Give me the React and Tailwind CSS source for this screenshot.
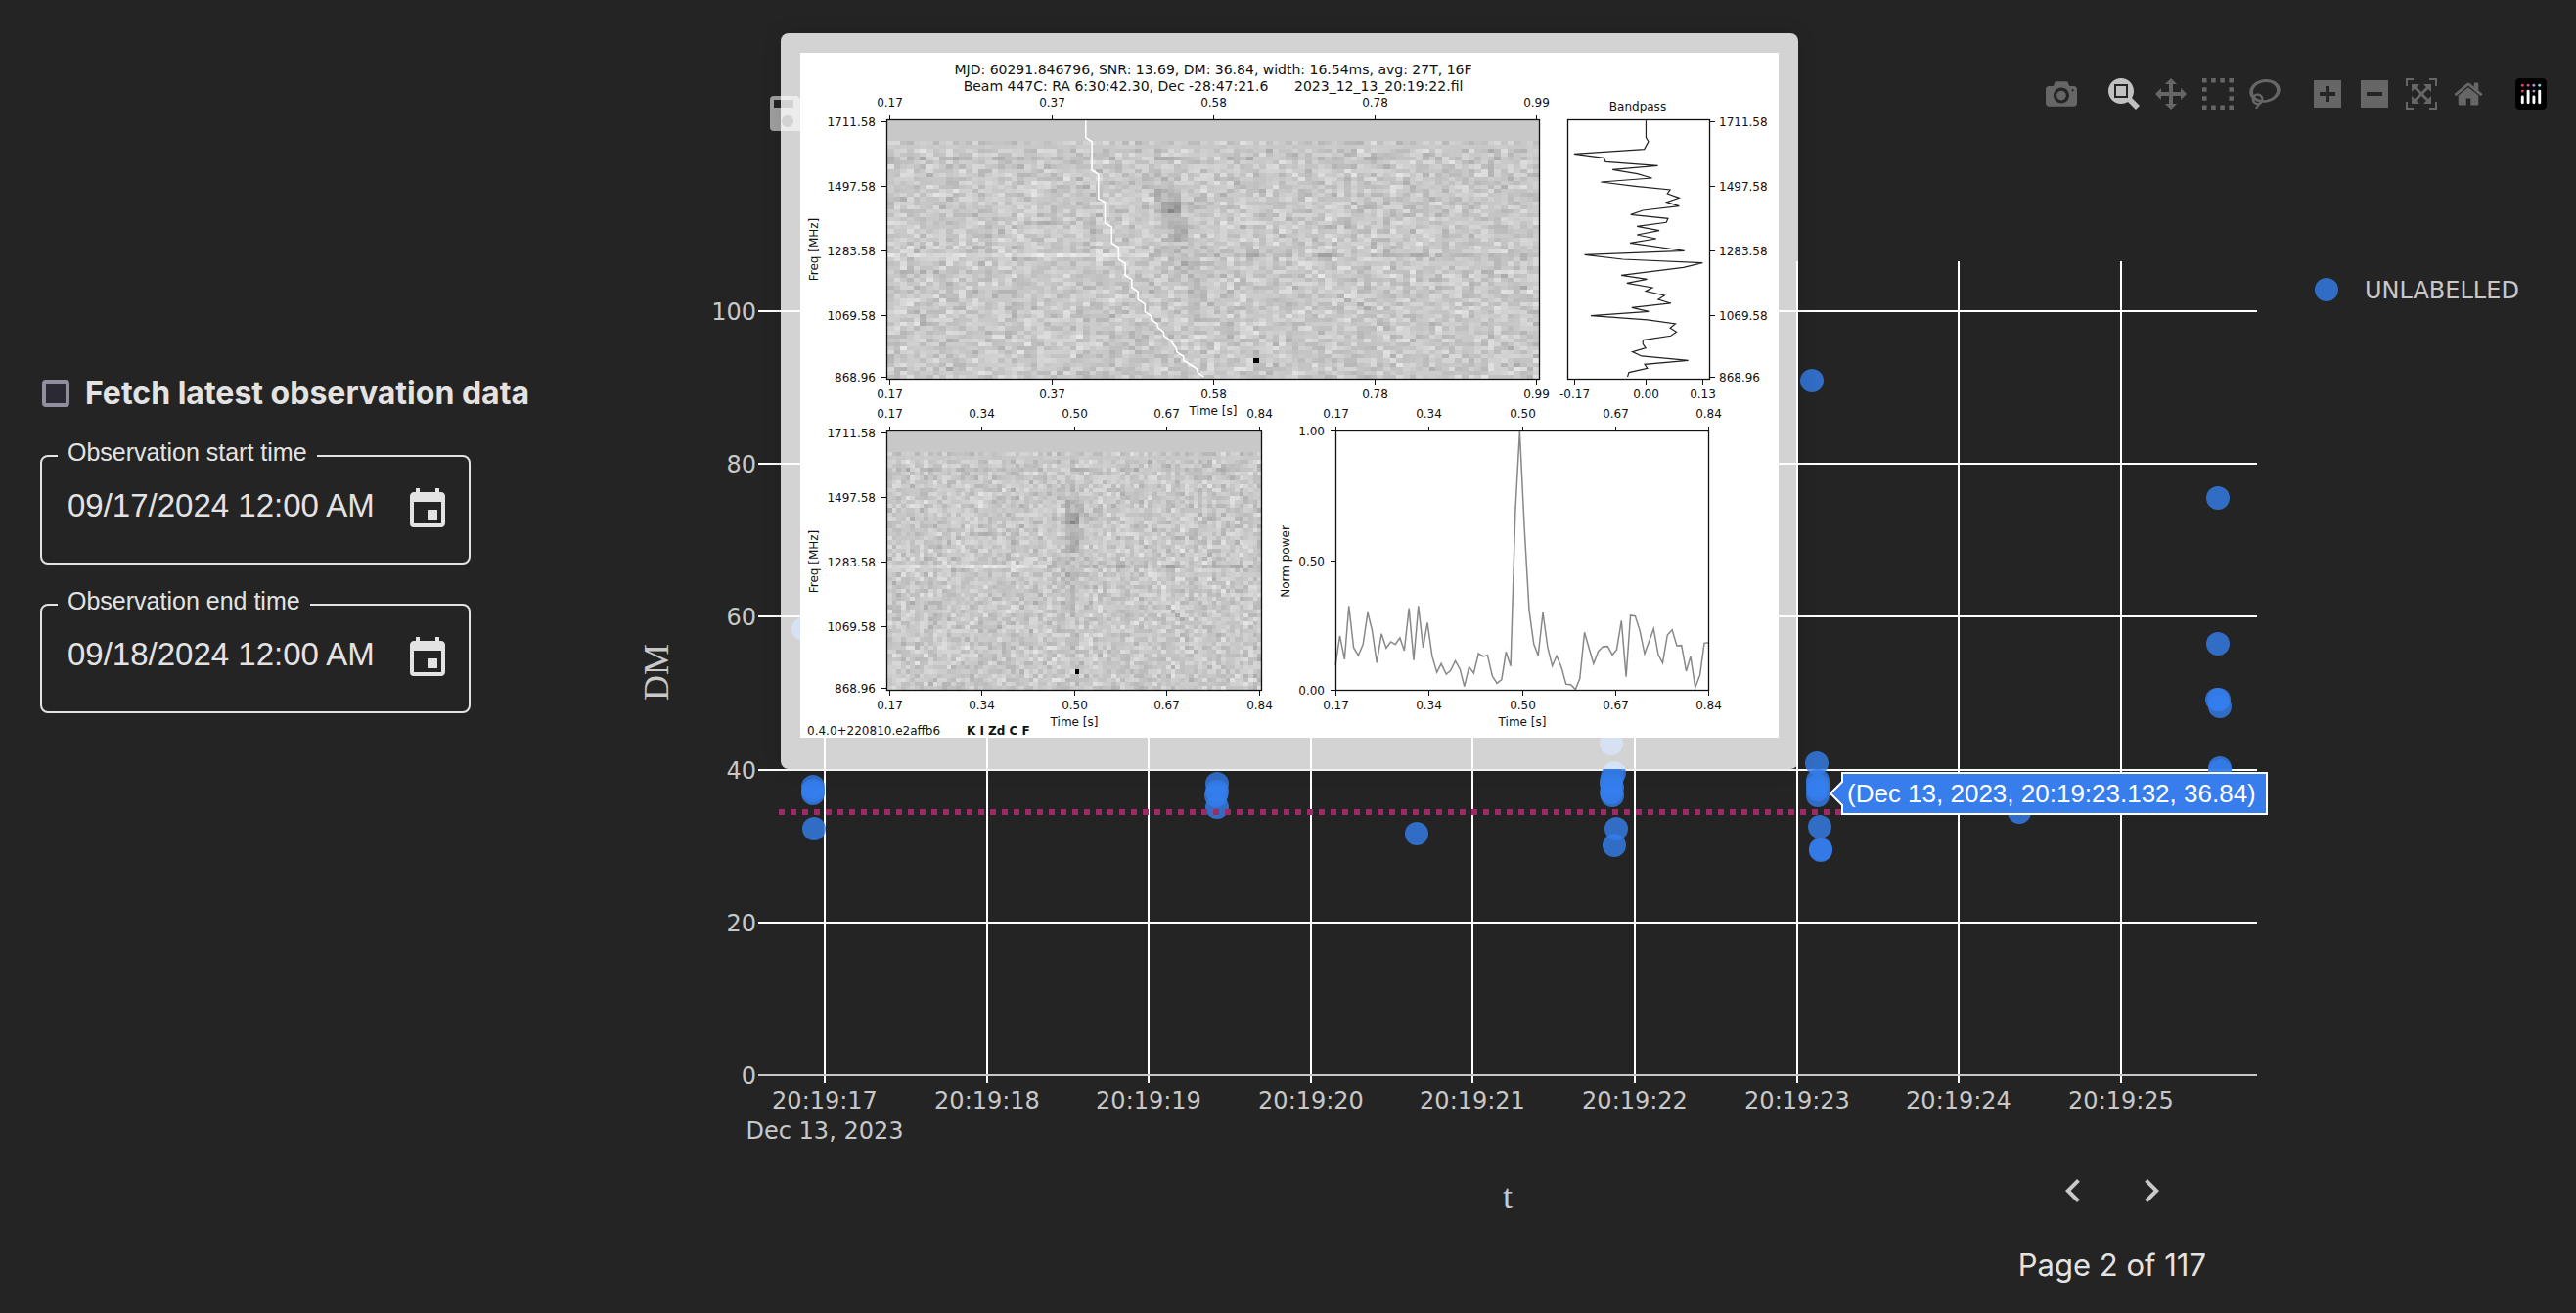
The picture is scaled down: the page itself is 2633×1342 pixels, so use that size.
import { MdChevronLeft, MdChevronRight, MdEvent, MdSave } from "react-icons/md";

const MODEBAR_GROUPS = [
  [
    {
      name: "Download plot as a png",
      width: 1000,
      path: "m500 450c-83 0-150-67-150-150 0-83 67-150 150-150 83 0 150 67 150 150 0 83-67 150-150 150z m400 150h-120c-16 0-34 13-39 29l-31 93c-6 15-23 28-40 28h-340c-16 0-34-13-39-28l-31-94c-6-15-23-28-40-28h-120c-55 0-100-45-100-100v-450c0-55 45-100 100-100h800c55 0 100 45 100 100v450c0 55-45 100-100 100z m-400-550c-138 0-250 112-250 250 0 138 112 250 250 250 138 0 250-112 250-250 0-138-112-250-250-250z m365 380c-19 0-35 16-35 35 0 19 16 35 35 35 19 0 35-16 35-35 0-19-16-35-35-35z",
    },
  ],
  [
    {
      name: "Zoom",
      active: true,
      width: 1000,
      path: "m1000-25l-250 251c40 63 63 138 63 218 0 224-182 406-407 406-224 0-406-182-406-406s183-406 407-406c80 0 155 22 218 62l250-250 125 125z m-812 250l0 438 437 0 0-438-437 0z m62 375l313 0 0-312-313 0 0 312z",
    },
    {
      name: "Pan",
      width: 1000,
      path: "m1000 350l-187 188 0-125-250 0 0 250 125 0-188 187-187-187 125 0 0-250-250 0 0 125-188-188 186-187 0 125 252 0 0-250-125 0 187-188 188 188-125 0 0 250 250 0 0-126 187 188z",
    },
    {
      name: "Box Select",
      width: 1000,
      path: "m0 850l0-143 143 0 0 143-143 0z m286 0l0-143 143 0 0 143-143 0z m285 0l0-143 143 0 0 143-143 0z m286 0l0-143 143 0 0 143-143 0z m-857-286l0-143 143 0 0 143-143 0z m857 0l0-143 143 0 0 143-143 0z m-857-285l0-143 143 0 0 143-143 0z m857 0l0-143 143 0 0 143-143 0z m-857-286l0-143 143 0 0 143-143 0z m286 0l0-143 143 0 0 143-143 0z m285 0l0-143 143 0 0 143-143 0z m286 0l0-143 143 0 0 143-143 0z",
    },
    {
      name: "Lasso Select",
      width: 1031,
      path: "m1018 538c-36 207-290 336-568 286-277-48-473-256-436-463 10-57 36-108 76-151-13-66 11-137 68-183 34-28 75-41 114-42l-55-70 0 0c-2-1-3-2-4-3-10-14-8-34 5-45 14-11 34-8 45 4 1 1 2 3 2 5l0 0 113 140c16 11 31 24 45 40 4 3 6 7 8 11 48-3 100 0 151 9 278 48 473 255 436 462z m-624-379c-80 14-149 48-197 96 42 42 109 47 156 9 33-26 47-66 41-105z m-187-74c-19 16-33 37-39 60 50-32 109-55 174-68-42-25-95-24-135 8z m360 75c-34-7-69-9-102-8 8 62-16 128-68 170-73 59-175 54-244-5-9 20-16 40-20 61-28 159 121 317 333 354s407-60 434-217c28-159-121-318-333-355z",
    },
  ],
  [
    {
      name: "Zoom in",
      width: 875,
      path: "m1 787l0-875 875 0 0 875-875 0z m687-500l-187 0 0-187-125 0 0 187-188 0 0 125 188 0 0 187 125 0 0-187 187 0 0-125z",
    },
    {
      name: "Zoom out",
      width: 875,
      path: "m0 788l0-876 875 0 0 876-875 0z m688-500l-500 0 0 125 500 0 0-125z",
    },
    {
      name: "Autoscale",
      width: 1000,
      path: "m250 850l-187 0-63 0 0-62 0-188 63 0 0 188 187 0 0 62z m688 0l-188 0 0-62 188 0 0-188 62 0 0 188 0 62-62 0z m-875-938l0 188-63 0 0-188 0-62 63 0 187 0 0 62-187 0z m875 188l0-188-188 0 0-62 188 0 62 0 0 62 0 188-62 0z m-125 188l-1 0-93-94-156 156 156 156 92-93 2 0 0 250-250 0 0-2 93-92-156-156-156 156 94 92 0 2-250 0 0-250 0 0 93 93 157-156-157-156-93 94 0 0 0-250 250 0 0 0-94 93 156 157 156-157-93-93 0 0 250 0 0 250z",
    },
    {
      name: "Reset axes",
      width: 929,
      path: "m786 296v-267q0-15-11-26t-25-10h-214v214h-143v-214h-214q-15 0-25 10t-11 26v267q0 1 0 2t0 2l321 264 321-264q1-1 1-4z m124 39l-34-41q-5-5-12-6h-2q-7 0-12 3l-386 322-386-322q-7-4-13-4-7 2-12 7l-35 41q-4 5-3 13t6 12l401 334q18 15 42 15t43-15l136-114v109q0 8 5 13t13 5h107q8 0 13-5t5-13v-227l122-102q5-5 6-12t-4-13z",
    },
  ],
];

function PlotlyLogo() {
  return (
    <svg viewBox="0 0 132 132" className="size-8">
      <rect width="132" height="132" rx="18" fill="#000" />
      <circle cx="30" cy="30" r="6" fill="#ef3c6e" />
      <circle cx="54" cy="30" r="6" fill="#c9568c" />
      <circle cx="78" cy="30" r="6" fill="#a49ccb" />
      <circle cx="102" cy="30" r="6" fill="#7bdcf2" />
      <circle cx="30" cy="54" r="6" fill="#ef3c6e" />
      <circle cx="78" cy="54" r="6" fill="#b09bc9" />
      <g fill="#fff">
        <rect x="24" y="72" width="12" height="36" rx="6" />
        <rect x="48" y="48" width="12" height="60" rx="6" />
        <rect x="72" y="72" width="12" height="36" rx="6" />
        <rect x="96" y="48" width="12" height="60" rx="6" />
      </g>
    </svg>
  );
}

function ModeBar() {
  return (
    <div className="flex gap-4">
      {MODEBAR_GROUPS.map((group, i) => (
        <div key={i} className="flex">
          {group.map((icon) => (
            <button
              key={icon.name}
              aria-label={icon.name}
              className={icon.active ? "p-2 text-[#c1c1c1]" : "p-2 text-[#666666]"}
            >
              <svg viewBox={`0 0 ${icon.width} 1000`} className="size-8">
                <path d={icon.path} fill="currentColor" transform="matrix(1 0 0 -1 0 850)" />
              </svg>
            </button>
          ))}
        </div>
      ))}
      <a href="#plotly" aria-label="Produced with Plotly" className="p-2">
        <PlotlyLogo />
      </a>
    </div>
  );
}

function DateTimeField({ id, label, value }) {
  return (
    <fieldset className="w-[440px] rounded-lg border-2 border-[#e3e3e3] text-[#e3e3e3] font-['Liberation_Sans',sans-serif]">
      <legend className="ml-4 px-[10px] pb-2 text-[25px] leading-6">
        <label htmlFor={id}>{label}</label>
      </legend>
      <div className="flex items-start justify-between pt-[15px] pb-[30px] pl-[26px] pr-[18px]">
        <input
          id={id}
          type="text"
          defaultValue={value}
          className="h-10 w-[330px] bg-transparent text-[33px] leading-10 outline-none"
        />
        <button aria-label={`Choose ${label}`}>
          <MdEvent size={48} />
        </button>
      </div>
    </fieldset>
  );
}

function Sidebar() {
  return (
    <aside className="w-[600px] shrink-0 pl-[41px] pt-[382px]">
      <div className="flex items-center gap-4 pl-0.5">
        <input
          id="latest"
          type="checkbox"
          className="size-7 appearance-none rounded-sm border-4 border-[#8f8f9d] bg-[#2b2a33]"
        />
        <label
          htmlFor="latest"
          className="whitespace-nowrap text-[32px] font-bold leading-10 text-[#e3e3e3] font-['Inter',sans-serif]"
        >
          Fetch latest observation data
        </label>
      </div>
      <div className="mt-7 flex flex-col gap-[25px]">
        <DateTimeField id="start" label="Observation start time" value="09/17/2024 12:00 AM" />
        <DateTimeField id="end" label="Observation end time" value="09/18/2024 12:00 AM" />
      </div>
    </aside>
  );
}

/* ---- candidate scatter plot ---- */

const SECONDS = [17, 18, 19, 20, 21, 22, 23, 24, 25];
const DM_TICKS = [0, 20, 40, 60, 80, 100];

const secondX = (s) => Math.round(843 + (s - 17) * 165.6);
const dmY = (dm) => Math.round(1099 - dm * 7.81);

const CANDIDATES = [
  [821, 643],
  [831, 804], [831, 808], [831, 811], [832, 847],
  [1244, 801], [1244, 809], [1243, 813], [1244, 825],
  [1448, 852],
  [1647, 760], [1650, 790], [1648, 794], [1647, 799], [1647, 801], [1648, 805], [1647, 810], [1648, 813],
  [1652, 847], [1650, 864],
  [1852, 389],
  [1857, 780], [1858, 798], [1858, 803], [1858, 807], [1858, 813],
  [1860, 845], [1861, 868], [1861, 869],
  [2064, 830],
  [2267, 509], [2267, 658],
  [2266, 715], [2268, 715], [2269, 722],
  [2269, 785], [2269, 788],
];

function CandidatePlot() {
  return (
    <svg viewBox="600 140 2033 1037" className="block w-full" fontFamily="'DejaVu Sans', Verdana, sans-serif" fontSize="24" fill="#c8c8c8">
      <g stroke="#fff" strokeWidth="2">
        {SECONDS.map((s) => (
          <line key={s} x1={secondX(s)} x2={secondX(s)} y1="267" y2="1107" />
        ))}
        {DM_TICKS.map((dm) => (
          <line key={dm} x1="775" x2="2307" y1={dmY(dm)} y2={dmY(dm)} stroke={dm === 0 ? "#c8c8c8" : "#fff"} />
        ))}
      </g>

      {DM_TICKS.map((dm) => (
        <text key={dm} x="773" y={dmY(dm) + 9} textAnchor="end">
          {dm}
        </text>
      ))}
      {SECONDS.map((s) => (
        <text key={s} x={secondX(s)} y="1133" textAnchor="middle">
          20:19:{s}
        </text>
      ))}
      <text x="843" y="1164" textAnchor="middle">
        Dec 13, 2023
      </text>
      <text transform="translate(683 687) rotate(-90)" textAnchor="middle" fontFamily="'Liberation Serif', serif" fontSize="36">
        DM
      </text>

      {CANDIDATES.map(([x, y], i) => (
        <circle key={i} cx={x} cy={y} r="12" fill="#357eee" opacity="0.8" />
      ))}
      <line x1="796" x2="2307" y1="830" y2="830" stroke="#9c2a66" strokeWidth="6" strokeDasharray="6 6" />

      <circle cx="2378" cy="296" r="12" fill="#357eee" opacity="0.8" />
      <text x="2417" y="305">
        UNLABELLED
      </text>

      <path d="M1871 811 L1883 799 V790 H2317 V832 H1883 V823 Z" fill="#377dec" stroke="#fff" strokeWidth="2" />
      <text x="1888" y="820" fill="#fff" fontFamily="'Liberation Sans', Arial, sans-serif" fontSize="26">
        (Dec 13, 2023, 20:19:23.132, 36.84)
      </text>
    </svg>
  );
}

/* ---- single candidate preview ---- */

const CHANNELS = 64;
const FREQS = ["1711.58", "1497.58", "1283.58", "1069.58", "868.96"];

const TRACK =
  "291.8,69 291.8,86.7 298.1,90.7 298.1,120 304.8,124 304.8,149 311.5,152.7 311.5,174 318.3,178 318.3,194.7 325.4,198.7 325.4,211 332.1,215.3 332.1,227.3 338.8,231.7 338.8,240 345.2,244 345.2,252 352.3,256.7 352.3,264.7 358.6,269 358.6,272.7 365.3,277.3 365.3,280.7 371.3,285.3 371.7,289.3 378.4,294 384.3,302 385,306 391.8,310.3 391.8,314.3 405.3,322.7 406.5,327 412.4,331";

const BANDPASS =
  "1071,310 1071,362 1078,374 1066,398 865,412 950,424 955,436 1105,448 975,460 1046,473 1088,486 942,498 1040,511 1140,522 1132,534 1166,547 1130,560 1166,572 1062,585 1027,598 1134,610 1129,622 1045,634 1109,647 1045,660 1100,672 1025,685 1181,709 895,721 1004,735 1233,746 1178,760 1000,784 1074,796 1016,808 1089,822 1070,833 1124,846 1106,858 1142,870 1030,883 1079,895 913,908 1075,921 1155,933 1140,946 1158,958 1142,970 1062,983 1062,995 1070,1007 1032,1019 1058,1032 1192,1045 1067,1057 1075,1069 1022,1082 1018,1095";

const PULSE =
  "230,840 242,750 255,822 267,658 280,786 293,810 306,776 319,678 331,732 344,832 357,743 370,787 383,768 395,776 408,756 420,795 433,665 446,824 459,658 472,786 484,709 497,812 510,862 522,835 536,867 548,856 561,826 574,852 586,905 599,845 612,864 625,804 638,813 650,809 663,872 676,895 689,884 701,799 714,842 727,365 739,122 752,420 765,670 778,776 790,810 803,678 816,784 829,842 841,811 854,845 867,898 880,899 893,914 905,881 918,739 931,790 943,835 956,797 969,783 982,782 995,808 1007,792 1020,703 1033,875 1045,687 1058,689 1071,734 1084,805 1109,728 1122,808 1134,833 1147,747 1160,731 1173,780 1186,779 1199,858 1211,813 1224,908 1237,870 1249,772 1262,770";

// dispersion delay of a channel, in time samples
function delay(row) {
  const f = 1711.58 - row * 13.4;
  return Math.round(18.3e6 * (1 / (f * f) - 1 / (1711.58 * 1711.58)));
}

function random(row, col) {
  let h = (row * 374761393 + col * 668265263) | 0;
  h = Math.imul(h ^ (h >>> 13), 1274126177);
  h = Math.imul(h ^ (h >>> 15), 2246822519);
  return ((h ^ (h >>> 16)) >>> 0) / 4294967296;
}

function burst(row) {
  if (row >= 20 && row <= 22) return 60;
  if (row >= 17 && row <= 24) return 32;
  if (row >= 25 && row <= 29) return 36;
  if (row >= 34 && row <= 38) return 16;
  return 6;
}

function sample(row, col) {
  const pulseCol = col - delay(row);
  if (row < 5) return 200;
  if (row === 59 && pulseCol === 41) return 0;
  const noise = random(row, col) + random(row + 100, col) + random(row + 200, col) - 1.5;
  const spread = row === 6 ? 4 : 22;
  let level = 201 + noise * spread;
  if (row > 6) level -= burst(row) * Math.exp(-((pulseCol - 40) ** 2) / 1.8);
  if (row === 33) level += col < 40 ? 18 : -12;
  if (row === 37 && col < 24) level -= 12;
  if (row === 9) level -= 6;
  return Math.max(0, Math.min(250, Math.round(level / 4) * 4));
}

function Waterfall({ x, y, width, height, cols, dedispersed }) {
  const levels = {};
  for (let r = 0; r < CHANNELS; r++) {
    const top = Math.round(y + (r * height) / CHANNELS);
    const bottom = Math.round(y + ((r + 1) * height) / CHANNELS);
    for (let c = 0; c < cols; c++) {
      const level = sample(r, dedispersed ? c + delay(r) : c);
      const left = Math.round(x + (c * width) / cols);
      const right = Math.round(x + ((c + 1) * width) / cols);
      levels[level] = (levels[level] || "") + `M${left} ${top}H${right}V${bottom}H${left}z`;
    }
  }
  return (
    <g shapeRendering="crispEdges">
      {Object.entries(levels).map(([level, d]) => (
        <path key={level} d={d} fill={`rgb(${level},${level},${level})`} />
      ))}
    </g>
  );
}

function Frame({ x, y, width, height }) {
  return <rect x={x} y={y} width={width} height={height} fill="none" stroke="#111" strokeWidth="1.3" />;
}

function XTicks({ xs, labels, top, bottom }) {
  return xs.map((x, i) => (
    <g key={x}>
      {top && <line x1={x} x2={x} y1={top - 5} y2={top} stroke="#111" />}
      {top && (
        <text x={x} y={top - 14} textAnchor="middle">
          {labels[i]}
        </text>
      )}
      <line x1={x} x2={x} y1={bottom} y2={bottom + 5} stroke="#111" />
      <text x={x} y={bottom + 19} textAnchor="middle">
        {labels[i]}
      </text>
    </g>
  ));
}

function YTicks({ x, ys, labels, right }) {
  return ys.map((y, i) => (
    <g key={y}>
      <line x1={right ? x : x - 5} x2={right ? x + 5 : x} y1={y} y2={y} stroke="#111" />
      <text x={right ? x + 9 : x - 11} y={y + 4} textAnchor={right ? "start" : "end"}>
        {labels[i]}
      </text>
    </g>
  ));
}

function CandidatePreview() {
  const wide = ["0.17", "0.37", "0.58", "0.78", "0.99"];
  const narrow = ["0.17", "0.34", "0.50", "0.67", "0.84"];
  return (
    <div className="absolute left-[198px] top-[34px] rounded-lg bg-white/80 px-5 pt-5 pb-8 shadow-[0_0_20px_rgba(0,0,0,0.12)]">
      <svg viewBox="0 0 1000 700" className="block h-[700px] w-[1000px] bg-white" fontFamily="'DejaVu Sans', sans-serif" fontSize="12" fill="#111">
        <g fontSize="14" textAnchor="middle">
          <text x="422" y="22">MJD: 60291.846796, SNR: 13.69, DM: 36.84, width: 16.54ms, avg: 27T, 16F</text>
          <text x="422" y="39">
            {"Beam 447C: RA 6:30:42.30, Dec -28:47:21.6\u00a0\u00a0\u00a0\u00a0\u00a0\u00a02023_12_13_20:19:22.fil"}
          </text>
        </g>

        <Waterfall x={89} y={69} width={667} height={264} cols={100} />
        <polyline points={TRACK} fill="none" stroke="#fff" strokeWidth="1.6" />
        <Frame x={88.5} y={68.5} width={667} height={265} />
        <XTicks xs={[91.5, 257.5, 422.5, 587.5, 752.5]} labels={wide} top={69} bottom={334} />
        <YTicks x={88} ys={[70.5, 136.5, 202.5, 268.5, 331.5]} labels={FREQS} />
        <text transform="translate(18 201) rotate(-90)" textAnchor="middle">Freq [MHz]</text>
        <text x="422" y="370" textAnchor="middle">Time [s]</text>

        <text x="856" y="59" textAnchor="middle">Bandpass</text>
        <polyline
          points={BANDPASS}
          transform="translate(482 -34) scale(0.3571 0.3333)"
          vectorEffect="non-scaling-stroke"
          fill="none"
          stroke="#222"
          strokeWidth="1.2"
        />
        <Frame x={784.5} y={68.5} width={145} height={265} />
        <XTicks xs={[791.5, 864.5, 922.5]} labels={["-0.17", "0.00", "0.13"]} bottom={334} />
        <YTicks x={930} ys={[70.5, 136.5, 202.5, 268.5, 331.5]} labels={FREQS} right />

        <Waterfall x={89} y={387} width={383} height={264} cols={82} dedispersed />
        <Frame x={88.5} y={386.5} width={383} height={265} />
        <XTicks xs={[91.5, 185.5, 280.5, 374.5, 469.5]} labels={narrow} top={387} bottom={652} />
        <YTicks x={88} ys={[388.5, 454.5, 520.5, 586.5, 649.5]} labels={FREQS} />
        <text transform="translate(18 520) rotate(-90)" textAnchor="middle">Freq [MHz]</text>
        <text x="280" y="688" textAnchor="middle">Time [s]</text>

        <polyline
          points={PULSE}
          transform="translate(462 346) scale(0.3699 0.3333)"
          vectorEffect="non-scaling-stroke"
          fill="none"
          stroke="#888"
          strokeWidth="1.5"
        />
        <Frame x={547.5} y={386.5} width={381} height={265} />
        <XTicks xs={[547.5, 642.5, 738.5, 833.5, 928.5]} labels={narrow} top={387} bottom={652} />
        <YTicks x={547} ys={[386.5, 519.5, 651.5]} labels={["1.00", "0.50", "0.00"]} />
        <text transform="translate(500 520) rotate(-90)" textAnchor="middle">Norm power</text>
        <text x="738" y="688" textAnchor="middle">Time [s]</text>

        <text x="7" y="697">0.4.0+220810.e2affb6</text>
        <text x="170" y="697" fontWeight="bold">K I Zd C F</text>
      </svg>
    </div>
  );
}

function Pagination() {
  return (
    <nav className="flex flex-col items-center gap-4 text-[31px] leading-10 text-[#e3e3e3] font-['Inter',sans-serif]">
      <div className="flex">
        <button aria-label="Previous page" className="p-4 text-[#c9c9c9]">
          <MdChevronLeft size={48} />
        </button>
        <button aria-label="Next page" className="p-4 text-[#c9c9c9]">
          <MdChevronRight size={48} />
        </button>
      </div>
      <span>Page 2 of 117</span>
    </nav>
  );
}

function App() {
  return (
    <div className="flex min-h-screen bg-[#242424]">
      <Sidebar />
      <main className="relative min-w-0 flex-1">
        <div className="flex items-start justify-between pl-[181px] pr-[22px] pt-[72px]">
          <button aria-label="Save" className="mt-5 h-12 text-[#a0a0a0]">
            <MdSave size={48} />
          </button>
          <ModeBar />
        </div>
        <CandidatePlot />
        <div className="ml-[175px] mr-[326px] grid grid-cols-3">
          <div className="col-start-2 pt-[22px] text-center text-4xl leading-[48px] text-[#c8c8c8] font-['Liberation_Serif',serif]">t</div>
          <div className="flex justify-end pr-[52px]">
            <Pagination />
          </div>
        </div>
        <CandidatePreview />
      </main>
    </div>
  );
}

export default App;
